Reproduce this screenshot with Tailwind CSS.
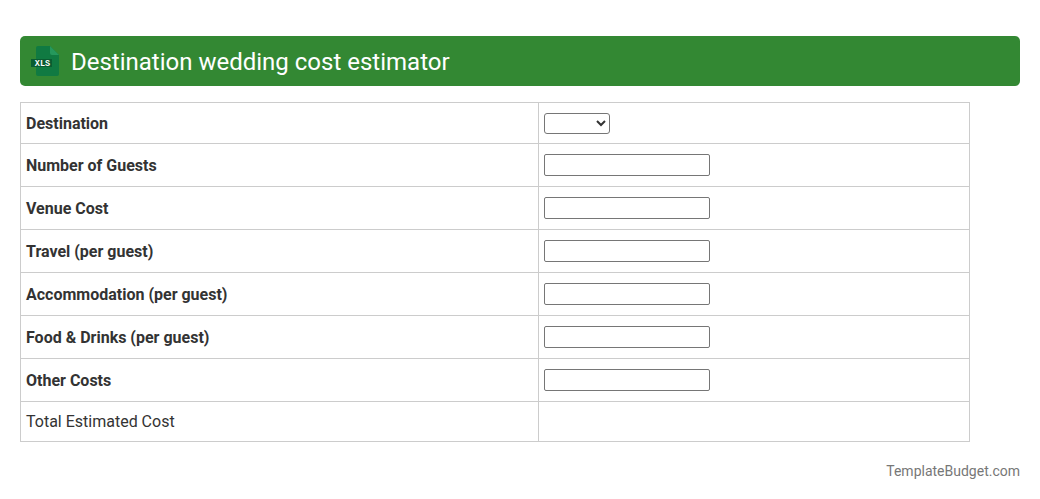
<!DOCTYPE html>
<html lang="en">
<head>
<meta charset="utf-8">
<title>Destination wedding cost estimator</title>
<script src="https://cdn.jsdelivr.net/npm/@tailwindcss/browser@4"></script>
</head>
<body class="bg-white font-['Roboto',sans-serif] text-[16px] leading-[24px] text-[#333]">
<div class="px-5 pt-9">
  <header class="flex h-[50px] items-center gap-[9px] rounded-[5px] bg-[#338833] pl-[10px] text-white">
    <svg class="h-[32px] w-[32px] shrink-0" viewBox="0 0 32 32">
      <path d="M6 3a2 2 0 0 1 2-2H20l9 9v19a2 2 0 0 1-2 2H8a2 2 0 0 1-2-2z" fill="#107a42"/>
      <path d="M20 1l9 9h-7a2 2 0 0 1-2-2z" fill="#25985c"/>
      <rect x="1" y="14" width="21" height="8" fill="#0a5c31"/>
      <text x="12.500" y="21" text-anchor="middle" font-family="Liberation Mono, monospace" font-size="8.500" font-weight="700" fill="#fff">XLS</text>
    </svg>
    <h1 class="pt-[2px] text-[24px] leading-[30px] font-normal">Destination wedding cost estimator</h1>
  </header>
  <table class="mt-4 w-[950px] table-fixed border-collapse">
    <colgroup><col class="w-[518px]"><col></colgroup>
    <tbody>
      <tr class="h-[41px]">
        <td class="border border-[#ccc] px-[5px] pt-[2px] pb-0 font-bold">Destination</td>
        <td class="border border-[#ccc] px-[5px] py-0"><select class="block h-[21px] w-[66px] rounded-[3px] border border-[#767676] bg-white text-[13px] [appearance:auto]"><option></option></select></td>
      </tr>
      <tr class="h-[43px]">
        <td class="border border-[#ccc] px-[5px] pt-[2px] pb-0 font-bold">Number of Guests</td>
        <td class="border border-[#ccc] px-[5px] py-0"><input type="text" class="block h-[22px] w-[166px] rounded-[2px] border border-[#767676] bg-white"></td>
      </tr>
      <tr class="h-[43px]">
        <td class="border border-[#ccc] px-[5px] pt-[2px] pb-0 font-bold">Venue Cost</td>
        <td class="border border-[#ccc] px-[5px] py-0"><input type="text" class="block h-[22px] w-[166px] rounded-[2px] border border-[#767676] bg-white"></td>
      </tr>
      <tr class="h-[43px]">
        <td class="border border-[#ccc] px-[5px] pt-[2px] pb-0 font-bold">Travel (per guest)</td>
        <td class="border border-[#ccc] px-[5px] py-0"><input type="text" class="block h-[22px] w-[166px] rounded-[2px] border border-[#767676] bg-white"></td>
      </tr>
      <tr class="h-[43px]">
        <td class="border border-[#ccc] px-[5px] pt-[2px] pb-0 font-bold">Accommodation (per guest)</td>
        <td class="border border-[#ccc] px-[5px] py-0"><input type="text" class="block h-[22px] w-[166px] rounded-[2px] border border-[#767676] bg-white"></td>
      </tr>
      <tr class="h-[43px]">
        <td class="border border-[#ccc] px-[5px] pt-[2px] pb-0 font-bold">Food &amp; Drinks (per guest)</td>
        <td class="border border-[#ccc] px-[5px] py-0"><input type="text" class="block h-[22px] w-[166px] rounded-[2px] border border-[#767676] bg-white"></td>
      </tr>
      <tr class="h-[43px]">
        <td class="border border-[#ccc] px-[5px] pt-[2px] pb-0 font-bold">Other Costs</td>
        <td class="border border-[#ccc] px-[5px] py-0"><input type="text" class="block h-[22px] w-[166px] rounded-[2px] border border-[#767676] bg-white"></td>
      </tr>
      <tr class="h-[40px]">
        <td class="border border-[#ccc] px-[5px] py-0">Total Estimated Cost</td>
        <td class="border border-[#ccc] px-[5px] py-0"></td>
      </tr>
    </tbody>
  </table>
  <footer class="mt-[17px] text-right text-[14px] leading-[24px] text-[#777]">TemplateBudget.com</footer>
</div>
</body>
</html>
